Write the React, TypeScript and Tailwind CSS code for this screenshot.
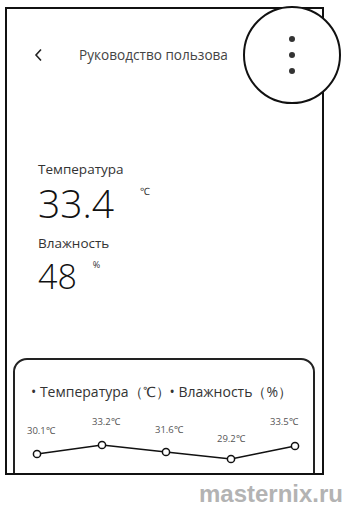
import React from 'react';

const POINTS = [
  { x: 22, y: 52, label: '30.1℃', lx: 12, ly: 32 },
  { x: 87, y: 43, label: '33.2℃', lx: 77, ly: 23 },
  { x: 151, y: 50, label: '31.6℃', lx: 140, ly: 31 },
  { x: 216, y: 57, label: '29.2℃', lx: 202, ly: 40 },
  { x: 280, y: 44, label: '33.5℃', lx: 255, ly: 23 },
];

function Chart() {
  const line = POINTS.map((p) => `${p.x},${p.y}`).join(' ');
  return (
    <svg width="300" height="80" viewBox="0 0 300 80" className="block">
      <polyline points={line} fill="none" stroke="#111" strokeWidth="1.6" />
      {POINTS.map((p) => (
        <g key={p.label}>
          <circle cx={p.x} cy={p.y} r="3.6" fill="#fff" stroke="#111" strokeWidth="1.5" />
          <text
            x={p.lx}
            y={p.ly}
            fontSize="9.5"
            fill="#555"
            fontFamily="'Open Sans', sans-serif"
          >
            {p.label}
          </text>
        </g>
      ))}
    </svg>
  );
}

export default function App() {
  return (
    <div className="relative w-[348px] h-[509px] bg-white overflow-hidden font-['Open_Sans',sans-serif] text-[#222]">
      {/* Phone frame */}
      <div className="ml-[5px] mt-[7px] w-[319px] h-[468px] border-2 border-[#111] overflow-hidden">
        {/* Header */}
        <div className="flex items-center h-[36px] mt-[28px]">
          <svg width="10" height="14" viewBox="0 0 10 14" className="ml-[27px]">
            <path d="M7 1.5 L2 7 L7 12.5" fill="none" stroke="#222" strokeWidth="1.6" />
          </svg>
          <span className="ml-[35px] text-[13.6px] text-[#444]">Руководство пользова</span>
        </div>

        {/* Readings */}
        <div className="pl-[31px] mt-[90px]">
          <div className="text-[13.5px] leading-[13px] text-[#333]">Температура</div>
          <div className="flex items-start mt-[9px]">
            <span className="text-[39px] leading-[36px] font-light text-[#111]">33.4</span>
            <span className="ml-[26px] mt-[-1px] text-[10px] leading-[14px] text-[#333]">℃</span>
          </div>
          <div className="text-[13.5px] leading-[13px] text-[#333] mt-[16px]">Влажность</div>
          <div className="flex items-start mt-[10px]">
            <span className="text-[34px] leading-[32px] font-light text-[#111]">48</span>
            <span className="ml-[16px] mt-[-1px] text-[9px] leading-[12px] text-[#333]">%</span>
          </div>
        </div>

        {/* Chart card */}
        <div className="ml-[6px] mr-[7px] mt-[66px] h-[140px] border-2 border-[#222] rounded-t-[14px]">
          <div className="pt-[22px] pl-[16px] text-[14px] leading-[20px] text-[#333] whitespace-nowrap">
            • Температура（℃）• Влажность（%）
          </div>
          <Chart />
        </div>
      </div>

      {/* Zoomed menu circle */}
      <div className="absolute left-[243px] top-[6px] w-[98px] h-[98px] rounded-full border-2 border-[#111] bg-white flex flex-col items-center justify-center gap-[10px]">
        <span className="w-[6px] h-[6px] rounded-full bg-[#333]" />
        <span className="w-[6px] h-[6px] rounded-full bg-[#333]" />
        <span className="w-[6px] h-[6px] rounded-full bg-[#333]" />
      </div>

      {/* Watermark */}
      <div className="flex justify-end pr-[5px] mt-[5px]">
        <span className="font-['Liberation_Sans',Arial,sans-serif] font-bold text-[24px] leading-[28px] text-[#b3b3b3]">
          masternix.ru
        </span>
      </div>
    </div>
  );
}
